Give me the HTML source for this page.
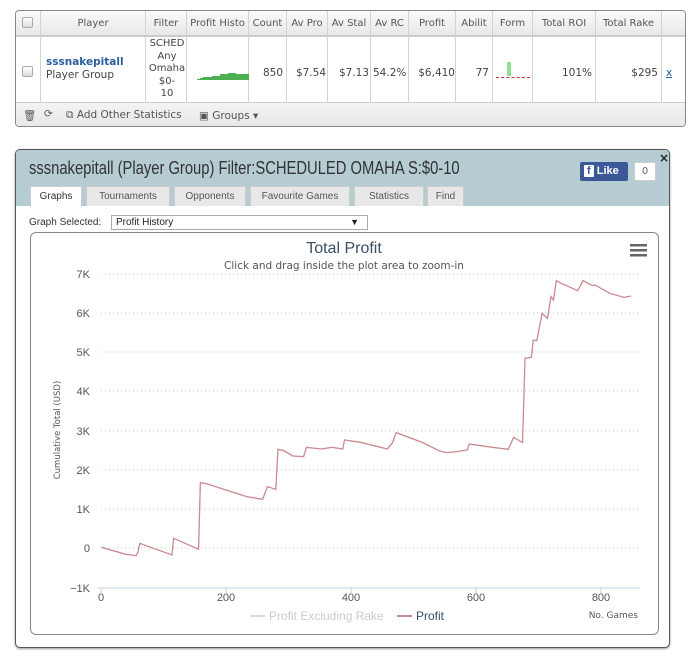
<!DOCTYPE html>
<html><head><meta charset="utf-8"><style>
*{box-sizing:border-box;margin:0;padding:0}
body{width:700px;height:662px;background:#fff;font-family:"DejaVu Sans","Liberation Sans",sans-serif;position:relative;overflow:hidden;color:#444}
.abs{position:absolute}
.tbl{left:15px;top:10px;width:671px;height:117px;border:1px solid #888;border-radius:4px;overflow:hidden;background:#fff}
.hdr{left:0;top:0;width:100%;height:25px;background:linear-gradient(#fafafa,#e8e8e8);border-bottom:1px solid #ccc}
.c{position:absolute;font-size:10px;color:#555;text-align:center;white-space:nowrap;overflow:hidden;border-right:1px solid #d4d4d4}
.v{position:absolute;top:56px;font-size:10.5px;color:#444;text-align:right;white-space:nowrap;overflow:hidden}
.foot{left:0;top:91px;width:100%;height:26px;background:linear-gradient(#f4f4f4,#e6e6e6);border-top:1px solid #ccc;font-size:10.5px;color:#555}
.cb{width:11px;height:11px;border:1px solid #aaa;border-radius:2px;background:linear-gradient(#fff,#ddd)}
.panel{left:15px;top:149px;width:655px;height:499px;border:1px solid #555;border-radius:5px;overflow:hidden;background:#fff;box-shadow:0 1px 2px #999}
.ph{left:0;top:0;width:100%;height:56px;background:#b6ccd3}
.tab{position:absolute;top:36px;height:20px;background:#e8e8e8;border:1px solid #ccc;border-bottom:none;font-size:10px;color:#555;text-align:center;line-height:19px;font-family:"Liberation Sans",sans-serif}
</style></head><body>
<div class="abs tbl">
 <div class="abs hdr"></div>
 <div class="c" style="left:0;top:0;width:25px;height:91px"></div>
 <div class="abs cb" style="left:6px;top:6px"></div>
 <div class="abs cb" style="left:6px;top:55px"></div>
 <div class="c" style="left:25px;top:0;width:105px;height:91px;line-height:25px">Player</div>
 <div class="c" style="left:130px;top:0;width:41px;height:91px;line-height:25px">Filter</div>
 <div class="c" style="left:171px;top:0;width:62px;height:91px;line-height:25px">Profit Histo</div>
 <div class="c" style="left:233px;top:0;width:38px;height:91px;line-height:25px">Count</div>
 <div class="c" style="left:271px;top:0;width:41px;height:91px;line-height:25px">Av Pro</div>
 <div class="c" style="left:312px;top:0;width:43px;height:91px;line-height:25px">Av Stal</div>
 <div class="c" style="left:355px;top:0;width:38px;height:91px;line-height:25px">Av RC</div>
 <div class="c" style="left:393px;top:0;width:47px;height:91px;line-height:25px">Profit</div>
 <div class="c" style="left:440px;top:0;width:37px;height:91px;line-height:25px">Abilit</div>
 <div class="c" style="left:477px;top:0;width:40px;height:91px;line-height:25px">Form</div>
 <div class="c" style="left:517px;top:0;width:63px;height:91px;line-height:25px">Total ROI</div>
 <div class="c" style="left:580px;top:0;width:66px;height:91px;line-height:25px">Total Rake</div>
 <div class="abs" style="left:0;top:25px;width:100%;height:1px;background:#ccc"></div>
 <div class="abs" style="left:30px;top:45px;font-size:10.5px;line-height:13px"><b style="color:#2a5e9e">sssnakepitall</b><br>Player Group</div>
 <div class="abs" style="left:131px;top:27px;width:40px;font-size:10px;line-height:12.5px;text-align:center;color:#444">SCHED<br>Any<br>Omaha<br>$0-<br>10</div>
 <svg class="abs" style="left:181px;top:57px" width="52" height="12"><path d="M0 11h3v-1h3v-1h9v-1h8v-2h8v-1h8v1h16v6H0z" fill="#4caf50"/></svg>
 <div class="v" style="left:233px;width:34px">850</div>
 <div class="v" style="left:271px;width:39px">$7.54</div>
 <div class="v" style="left:312px;width:41px">$7.13</div>
 <div class="v" style="left:355px;width:38px;text-align:left;padding-left:2px">54.2%</div>
 <div class="v" style="left:393px;width:46px">$6,410</div>
 <div class="v" style="left:440px;width:33px">77</div>
 <div class="v" style="left:517px;width:59px">101%</div>
 <div class="v" style="left:580px;width:62px">$295</div>
 <div class="v" style="left:650px;color:#2a5e9e;text-decoration:underline">x</div>
 <div class="abs" style="left:491px;top:51px;width:4px;height:14px;background:#8fe08f"></div>
 <div class="abs" style="left:480px;top:66px;width:34px;border-top:1px dashed #c33"></div>
 <div class="abs foot"><span class="abs" style="left:7px;top:6px">🗑</span><span class="abs" style="left:28px;top:5px">⟳</span><span class="abs" style="left:50px;top:6px">⧉ Add Other Statistics</span><span class="abs" style="left:183px;top:7px">▣ Groups ▾</span></div>
</div>

<div class="abs panel">
 <div class="abs ph"></div>
 <div class="abs" style="left:13px;top:8px;font-family:'Liberation Sans',sans-serif;font-size:18px;color:#333;white-space:nowrap;transform:scaleX(0.82);transform-origin:0 0">sssnakepitall (Player Group) Filter:SCHEDULED OMAHA S:$0-10</div>
 <div class="abs" style="left:564px;top:12px;width:48px;height:19px;background:#3b5998;border-radius:2px;color:#fff;font:bold 11px 'Liberation Sans',sans-serif;line-height:19px;padding-left:4px"><span style="background:#fff;color:#3b5998;padding:0 3px;border-radius:1px">f</span> Like</div>
 <div class="abs" style="left:618px;top:12px;width:22px;height:19px;background:#fff;border:1px solid #ccc;font-size:10px;text-align:center;line-height:17px;color:#666">0</div>
 <div class="abs" style="left:643px;top:1px;font-size:12px;font-weight:bold;color:#222">×</div>
 <div class="tab" style="left:14px;width:52px;background:#fff;color:#333;height:21px">Graphs</div>
 <div class="tab" style="left:70px;width:84px">Tournaments</div>
 <div class="tab" style="left:158px;width:72px">Opponents</div>
 <div class="tab" style="left:234px;width:100px">Favourite Games</div>
 <div class="tab" style="left:338px;width:70px">Statistics</div>
 <div class="tab" style="left:411px;width:37px">Find</div>
 <div class="abs" style="left:13px;top:67px;font:10px 'Liberation Sans',sans-serif;color:#333">Graph Selected:</div>
 <div class="abs" style="left:95px;top:65px;width:257px;height:15px;border:1px solid #aaa;font:10px 'Liberation Sans',sans-serif;color:#222;padding:1px 4px">Profit History<span style="position:absolute;right:8px;font-size:9px">▼</span></div>
 <div class="abs" style="left:14px;top:82px;width:629px;height:403px;border:1px solid #888;border-radius:6px"></div>
</div>

<svg class="abs" style="left:0;top:0" width="700" height="662">
 <g stroke="#c8c8c8" stroke-dasharray="1,3" stroke-width="1">
  <line x1="101" y1="274" x2="640" y2="274"/><line x1="101" y1="313" x2="640" y2="313"/><line x1="101" y1="352" x2="640" y2="352"/><line x1="101" y1="391" x2="640" y2="391"/><line x1="101" y1="431" x2="640" y2="431"/><line x1="101" y1="470" x2="640" y2="470"/><line x1="101" y1="509" x2="640" y2="509"/><line x1="101" y1="548" x2="640" y2="548"/>
 </g>
 <line x1="97" y1="588" x2="640" y2="588" stroke="#c0d0e0"/>
 <g stroke="#ccc"><line x1="101" y1="588" x2="101" y2="593"/><line x1="226" y1="588" x2="226" y2="593"/><line x1="351" y1="588" x2="351" y2="593"/><line x1="476" y1="588" x2="476" y2="593"/><line x1="601" y1="588" x2="601" y2="593"/></g>
 <polyline transform="translate(90,260) scale(0.356,0.3333)" vector-effect="non-scaling-stroke" fill="none" stroke="#c98a90" stroke-width="1.3" points="32,862 100,883 130,887 135,875 140,850 230,885 235,835 305,868 310,668 330,672 440,710 485,718 498,680 522,688 528,568 545,572 570,588 600,590 608,562 650,567 680,562 710,567 715,540 760,547 835,567 850,548 860,518 935,548 980,572 1000,578 1030,575 1060,570 1065,552 1130,562 1175,568 1190,532 1215,548 1222,295 1240,292 1245,240 1255,242 1270,160 1285,175 1295,110 1302,120 1310,62 1320,68 1370,92 1385,62 1410,76 1420,76 1460,100 1500,112 1520,108"/>
 <g font-family="Liberation Sans, sans-serif" fill="#555" font-size="11" text-anchor="end">
  <text x="90" y="278">7K</text><text x="90" y="317">6K</text><text x="90" y="356">5K</text><text x="90" y="395">4K</text><text x="90" y="435">3K</text><text x="90" y="474">2K</text><text x="90" y="513">1K</text><text x="90" y="552">0</text><text x="90" y="592">−1K</text>
 </g>
 <g font-family="Liberation Sans, sans-serif" fill="#555" font-size="11" text-anchor="middle">
  <text x="101" y="601">0</text><text x="226" y="601">200</text><text x="351" y="601">400</text><text x="476" y="601">600</text><text x="601" y="601">800</text>
 </g>
 <text x="344" y="253" font-family="Liberation Sans, sans-serif" font-size="16" fill="#3a4f66" text-anchor="middle">Total Profit</text>
 <text x="344" y="269" font-family="DejaVu Sans, sans-serif" font-size="10.5" fill="#555" text-anchor="middle">Click and drag inside the plot area to zoom-in</text>
 <text transform="translate(60,430) rotate(-90)" font-family="DejaVu Sans, sans-serif" font-size="8.5" fill="#555" text-anchor="middle">Cumulative Total (USD)</text>
 <g fill="#666"><rect x="630" y="244" width="17" height="2.5"/><rect x="630" y="249" width="17" height="2.5"/><rect x="630" y="254" width="17" height="2.5"/></g>
 <line x1="250" y1="616" x2="265" y2="616" stroke="#ddd" stroke-width="2"/>
 <text x="269" y="620" font-family="Liberation Sans, sans-serif" font-size="12" fill="#ccc">Profit Excluding Rake</text>
 <line x1="397" y1="616" x2="412" y2="616" stroke="#c98a90" stroke-width="2"/>
 <text x="416" y="620" font-family="Liberation Sans, sans-serif" font-size="12" fill="#3a4f66">Profit</text>
 <text x="638" y="618" font-family="DejaVu Sans, sans-serif" font-size="9" fill="#555" text-anchor="end">No. Games</text>
</svg>
</body></html>
